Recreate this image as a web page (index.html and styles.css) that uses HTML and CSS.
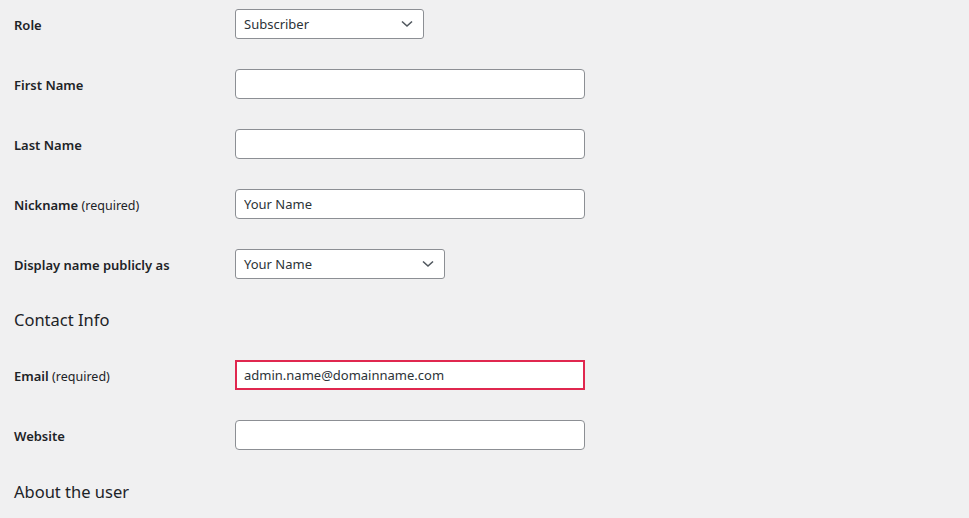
FILE: index.html
```html
<!DOCTYPE html>
<html lang="en">
<head>
<meta charset="utf-8">
<title>Profile</title>
<link rel="stylesheet" href="styles.css">
</head>
<body>
<form class="profile">
  <div class="row">
    <label class="label">Role</label>
    <div class="select select-role"><span>Subscriber</span><svg class="chev" viewBox="0 0 12 8" width="12" height="8"><path d="M1 1.5 L6 6 L11 1.5" fill="none" stroke="#50575e" stroke-width="1.6"/></svg></div>
  </div>
  <div class="row">
    <label class="label">First Name</label>
    <input class="field" type="text" value="">
  </div>
  <div class="row">
    <label class="label">Last Name</label>
    <input class="field" type="text" value="">
  </div>
  <div class="row">
    <label class="label">Nickname <span class="req">(required)</span></label>
    <input class="field" type="text" value="Your Name">
  </div>
  <div class="row">
    <label class="label">Display name publicly as</label>
    <div class="select select-display"><span>Your Name</span><svg class="chev" viewBox="0 0 12 8" width="12" height="8"><path d="M1 1.5 L6 6 L11 1.5" fill="none" stroke="#50575e" stroke-width="1.6"/></svg></div>
  </div>
  <h2 class="section">Contact Info</h2>
  <div class="row">
    <label class="label">Email <span class="req">(required)</span></label>
    <input class="field invalid" type="text" value="admin.name@domainname.com">
  </div>
  <div class="row">
    <label class="label">Website</label>
    <input class="field" type="text" value="">
  </div>
  <h2 class="section last">About the user</h2>
</form>
</body>
</html>
```
FILE: styles.css
```css
html, body {
  margin: 0;
  padding: 0;
  background: #f0f0f1;
}
body {
  font-family: "Noto Sans", "Open Sans", sans-serif;
  font-size: 13px;
  color: #1d2327;
}
.profile {
  display: flex;
  flex-direction: column;
  gap: 30px;
  padding: 9px 0 0 14px;
}
.row {
  display: grid;
  grid-template-columns: 221px auto;
  align-items: center;
  height: 30px;
}
.label {
  font-weight: 600;
  font-size: 13px;
  padding-top: 2px;
}
.req {
  font-weight: 400;
  font-size: 12.5px;
}
.field {
  box-sizing: border-box;
  width: 350px;
  height: 30px;
  margin: 0;
  padding: 0 8px;
  border: 1px solid #8c8f94;
  border-radius: 4px;
  background: #fff;
  font: inherit;
  font-size: 13px;
  color: #2c3338;
  outline: none;
}
.field.invalid {
  border: 2px solid #e0274f;
  border-radius: 0;
  padding: 0 7px;
}
.select {
  box-sizing: border-box;
  display: flex;
  align-items: center;
  justify-content: space-between;
  height: 30px;
  padding: 0 10px 0 8px;
  border: 1px solid #8c8f94;
  border-radius: 3px;
  background: #fff;
  color: #2c3338;
}
.select-role { width: 189px; }
.select-display { width: 210px; }
.chev { display: block; }
.section {
  margin: 0;
  font-size: 16.5px;
  font-weight: 400;
  line-height: 21px;
  height: 21px;
}
.section.last {
  margin-top: 1px;
}
```
